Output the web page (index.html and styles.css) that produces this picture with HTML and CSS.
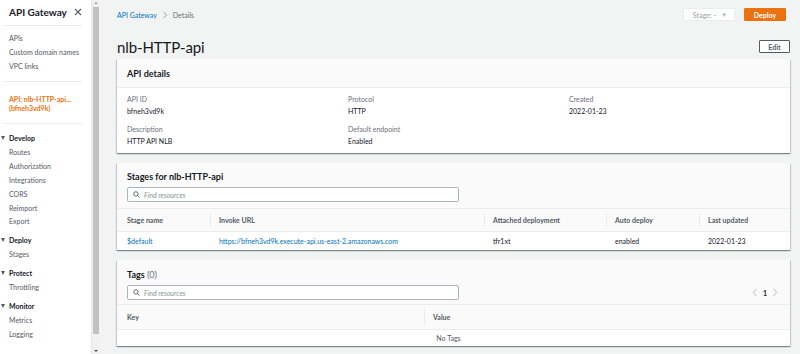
FILE: index.html
```html
<!DOCTYPE html>
<html lang="en">
<head>
  <meta charset="UTF-8">
  <title>API Gateway - Details</title>
  <link rel="stylesheet" href="styles.css">
</head>
<body>
<div class="layout">

  <nav class="sidebar">
    <div class="side-title">
      <span>API Gateway</span>
      <svg class="close" width="8" height="8" viewBox="0 0 8 8"><path d="M1 1L7 7M7 1L1 7" stroke="#545b64" stroke-width="1.1"/></svg>
    </div>
    <ul class="side-list top">
      <li>APIs</li>
      <li>Custom domain names</li>
      <li>VPC links</li>
    </ul>
    <div class="side-api">API: nlb-HTTP-api...<br>(bfneh3vd9k)</div>
    <div class="side-groups">
      <div class="group">
        <div class="group-head">Develop</div>
        <ul class="side-list">
          <li>Routes</li>
          <li>Authorization</li>
          <li>Integrations</li>
          <li>CORS</li>
          <li>Reimport</li>
          <li>Export</li>
        </ul>
      </div>
      <div class="group">
        <div class="group-head">Deploy</div>
        <ul class="side-list"><li>Stages</li></ul>
      </div>
      <div class="group">
        <div class="group-head">Protect</div>
        <ul class="side-list"><li>Throttling</li></ul>
      </div>
      <div class="group">
        <div class="group-head">Monitor</div>
        <ul class="side-list"><li>Metrics</li><li>Logging</li></ul>
      </div>
    </div>
  </nav>

  <div class="scrollbar">
    <span class="arrow up"></span>
    <div class="thumb"></div>
    <span class="arrow down"></span>
  </div>

  <main class="content">
    <div class="topbar">
      <div class="crumbs">
        <a>API Gateway</a>
        <svg width="6" height="8" viewBox="0 0 6 8"><path d="M1.5 0.8L4.6 4L1.5 7.2" fill="none" stroke="#879596" stroke-width="0.9"/></svg>
        <span>Details</span>
      </div>
      <div class="actions">
        <div class="stage-select">Stage: - <span class="caret">▼</span></div>
        <button class="btn primary">Deploy</button>
      </div>
    </div>

    <div class="page-head">
      <h1>nlb-HTTP-api</h1>
      <button class="btn">Edit</button>
    </div>

    <section class="card">
      <div class="card-head"><h2>API details</h2></div>
      <div class="details">
        <div><div class="label">API ID</div><div class="value">bfneh3vd9k</div></div>
        <div><div class="label">Protocol</div><div class="value">HTTP</div></div>
        <div><div class="label">Created</div><div class="value">2022-01-23</div></div>
        <div><div class="label">Description</div><div class="value">HTTP API NLB</div></div>
        <div><div class="label">Default endpoint</div><div class="value">Enabled</div></div>
      </div>
    </section>

    <section class="card">
      <div class="card-head tall">
        <h2>Stages for nlb-HTTP-api</h2>
        <div class="tools">
          <div class="search">
            <svg width="7" height="7" viewBox="0 0 7 7"><circle cx="2.9" cy="2.9" r="2.2" fill="none" stroke="#545b64" stroke-width="0.9"/><path d="M4.5 4.5L6.5 6.5" stroke="#545b64" stroke-width="0.9"/></svg>
            <span>Find resources</span>
          </div>
        </div>
      </div>
      <table class="grid stages">
        <thead>
          <tr><th>Stage name</th><th>Invoke URL</th><th>Attached deployment</th><th>Auto deploy</th><th>Last updated</th></tr>
        </thead>
        <tbody>
          <tr>
            <td><a>$default</a></td>
            <td><a>https://bfneh3vd9k.execute-api.us-east-2.amazonaws.com</a></td>
            <td>tfr1xt</td>
            <td>enabled</td>
            <td>2022-01-23</td>
          </tr>
        </tbody>
      </table>
    </section>

    <section class="card">
      <div class="card-head tall tags-head">
        <h2>Tags <span class="count">(0)</span></h2>
        <div class="tools">
          <div class="search">
            <svg width="7" height="7" viewBox="0 0 7 7"><circle cx="2.9" cy="2.9" r="2.2" fill="none" stroke="#545b64" stroke-width="0.9"/><path d="M4.5 4.5L6.5 6.5" stroke="#545b64" stroke-width="0.9"/></svg>
            <span>Find resources</span>
          </div>
          <div class="pager">
            <svg width="6" height="9" viewBox="0 0 6 9"><path d="M4.5 0.8L1.3 4.5L4.5 8.2" fill="none" stroke="#aab7b8" stroke-width="0.9"/></svg>
            <b>1</b>
            <svg width="6" height="9" viewBox="0 0 6 9"><path d="M1.5 0.8L4.7 4.5L1.5 8.2" fill="none" stroke="#aab7b8" stroke-width="0.9"/></svg>
          </div>
        </div>
      </div>
      <table class="grid tags">
        <thead><tr><th>Key</th><th>Value</th></tr></thead>
        <tbody><tr><td colspan="2" class="empty">No Tags</td></tr></tbody>
      </table>
    </section>
  </main>
</div>
</body>
</html>
```

FILE: styles.css
```css
* { box-sizing: border-box; margin: 0; padding: 0; }
html, body { height: 100%; }
body { font-family: "Lato", "Open Sans", sans-serif; font-size: 7px; color: #16191f; background: #f2f3f3; overflow: hidden; }
ul { list-style: none; }
a { color: #0073bb; text-decoration: none; }

.layout { display: flex; height: 354px; }

/* sidebar */
.sidebar { width: 91px; flex: none; background: #fff; color: #545b64; }
.side-title { display: flex; justify-content: space-between; align-items: center; height: 26px; margin: 0 9px 0 4px; padding: 0 0 1px 5px; border-bottom: 1px solid #eaeded; font-size: 10px; font-weight: 700; color: #16191f; }
.side-list li { line-height: 13.8px; padding-left: 9px; white-space: nowrap; }
.side-list.top { padding: 6px 0 8px; margin: 0 9px 0 4px; border-bottom: 1px solid #eaeded; }
.side-list.top li { padding-left: 5px; }
.side-api { margin: 0 9px 0 4px; padding: 13px 0 10px 5px; line-height: 9px; border-bottom: 1px solid #eaeded; color: #ec7211; font-weight: 700; }
.side-groups { padding-top: 6px; }
.group + .group { margin-top: 3px; }
.group-head { line-height: 16px; padding-left: 9px; font-weight: 700; color: #16191f; position: relative; }
.group-head::before { content: ""; position: absolute; left: 1px; top: 6px; border-left: 2.5px solid transparent; border-right: 2.5px solid transparent; border-top: 4px solid #545b64; }

/* fake scrollbar */
.scrollbar { width: 8px; flex: none; background: #f1f1f1; border-left: 1px solid #e6e6e6; display: flex; flex-direction: column; align-items: center; }
.scrollbar .thumb { width: 6px; flex: 1; background: #c1c1c1; margin: 1px 0 14px; }
.arrow { width: 0; height: 0; margin: 2px 0; border-left: 2px solid transparent; border-right: 2px solid transparent; }
.arrow.up { border-bottom: 2px solid #a3a3a3; }
.arrow.down { border-top: 2px solid #505050; }

/* main */
.content { flex: 1; padding: 8px 10px 0 18px; min-width: 0; }
.topbar { display: flex; justify-content: space-between; align-items: center; height: 13px; }
.crumbs { display: flex; align-items: center; gap: 4px; color: #687078; }
.crumbs svg { margin: 0 1px; }
.actions { display: flex; gap: 9px; margin-right: 4px; }
.stage-select { width: 52px; height: 13px; background: #fff; border: 1px solid #eaeded; color: #aab7b8; font-weight: 700; display: flex; align-items: center; justify-content: center; gap: 5px; padding-left: 2px; }
.caret { font-size: 6px; }
.btn { font-family: inherit; font-size: 7px; font-weight: 700; height: 13px; padding: 0 7px; background: #fff; color: #545b64; border: 1px solid #545b64; border-radius: 1px; }
.btn.primary { width: 42px; background: #ec7211; border-color: #ec7211; color: #fff; }

.page-head { display: flex; justify-content: space-between; align-items: center; margin-top: 19px; height: 13px; }
h1 { font-size: 15px; font-weight: 400; color: #16191f; letter-spacing: -0.1px; }
.page-head .btn { width: 31px; padding: 0; }

.card { background: #fff; margin-top: 6px; box-shadow: 0 1px 1px 0 rgba(0,28,36,0.3), 1px 1px 1px 0 rgba(0,28,36,0.15), -1px 1px 1px 0 rgba(0,28,36,0.15); }
.card + .card { margin-top: 10px; }
.card-head { background: #fafafa; border-bottom: 1px solid #eaeded; height: 29px; padding: 0 10px; display: flex; align-items: center; }
.card-head.tall { height: 46px; display: block; padding: 7px 10px 0; }
.card-head.tags-head { height: 45px; padding-top: 8px; }
h2 { font-size: 9px; font-weight: 700; color: #16191f; line-height: 13px; }
.count { font-weight: 400; color: #687078; }

.details { display: grid; grid-template-columns: 221px 221px 1fr; row-gap: 8px; padding: 6px 10px 7px; }
.label { color: #687078; line-height: 10px; height: 10px; }
.value { line-height: 10px; height: 10px; margin-top: 2px; }

.tools { display: flex; justify-content: space-between; align-items: center; margin-top: 4px; }
.search { width: 332px; height: 15px; background: #fff; border: 1px solid #aab7b8; border-radius: 2px; display: flex; align-items: center; gap: 4px; padding-left: 5px; color: #879596; font-style: italic; }
.pager { display: flex; align-items: center; gap: 5px; margin-right: 2px; font-size: 7px; }

.grid { width: 100%; border-collapse: collapse; }
.grid th { background: #fafafa; height: 22px; text-align: left; font-weight: 700; color: #545b64; padding: 0 9px; position: relative; border-bottom: 1px solid #eaeded; }
.grid th:first-child { padding-left: 10px; }
.grid th + th::before { content: ""; position: absolute; left: 0; top: 4px; bottom: 4px; border-left: 1px solid #eaeded; }
.grid td { height: 19px; padding: 0 9px; color: #16191f; white-space: nowrap; }
.grid td:first-child { padding-left: 10px; }
.stages th:nth-child(1) { width: 93px; }
.stages th:nth-child(2) { width: 274px; }
.stages th:nth-child(3) { width: 122px; }
.stages th:nth-child(4) { width: 93px; }
.tags th:nth-child(1) { width: 307px; }
.tags th { height: 24px; }
.tags td { height: 17px; }
.grid td.empty { text-align: center; color: #545b64; padding-right: 20px; }
```
